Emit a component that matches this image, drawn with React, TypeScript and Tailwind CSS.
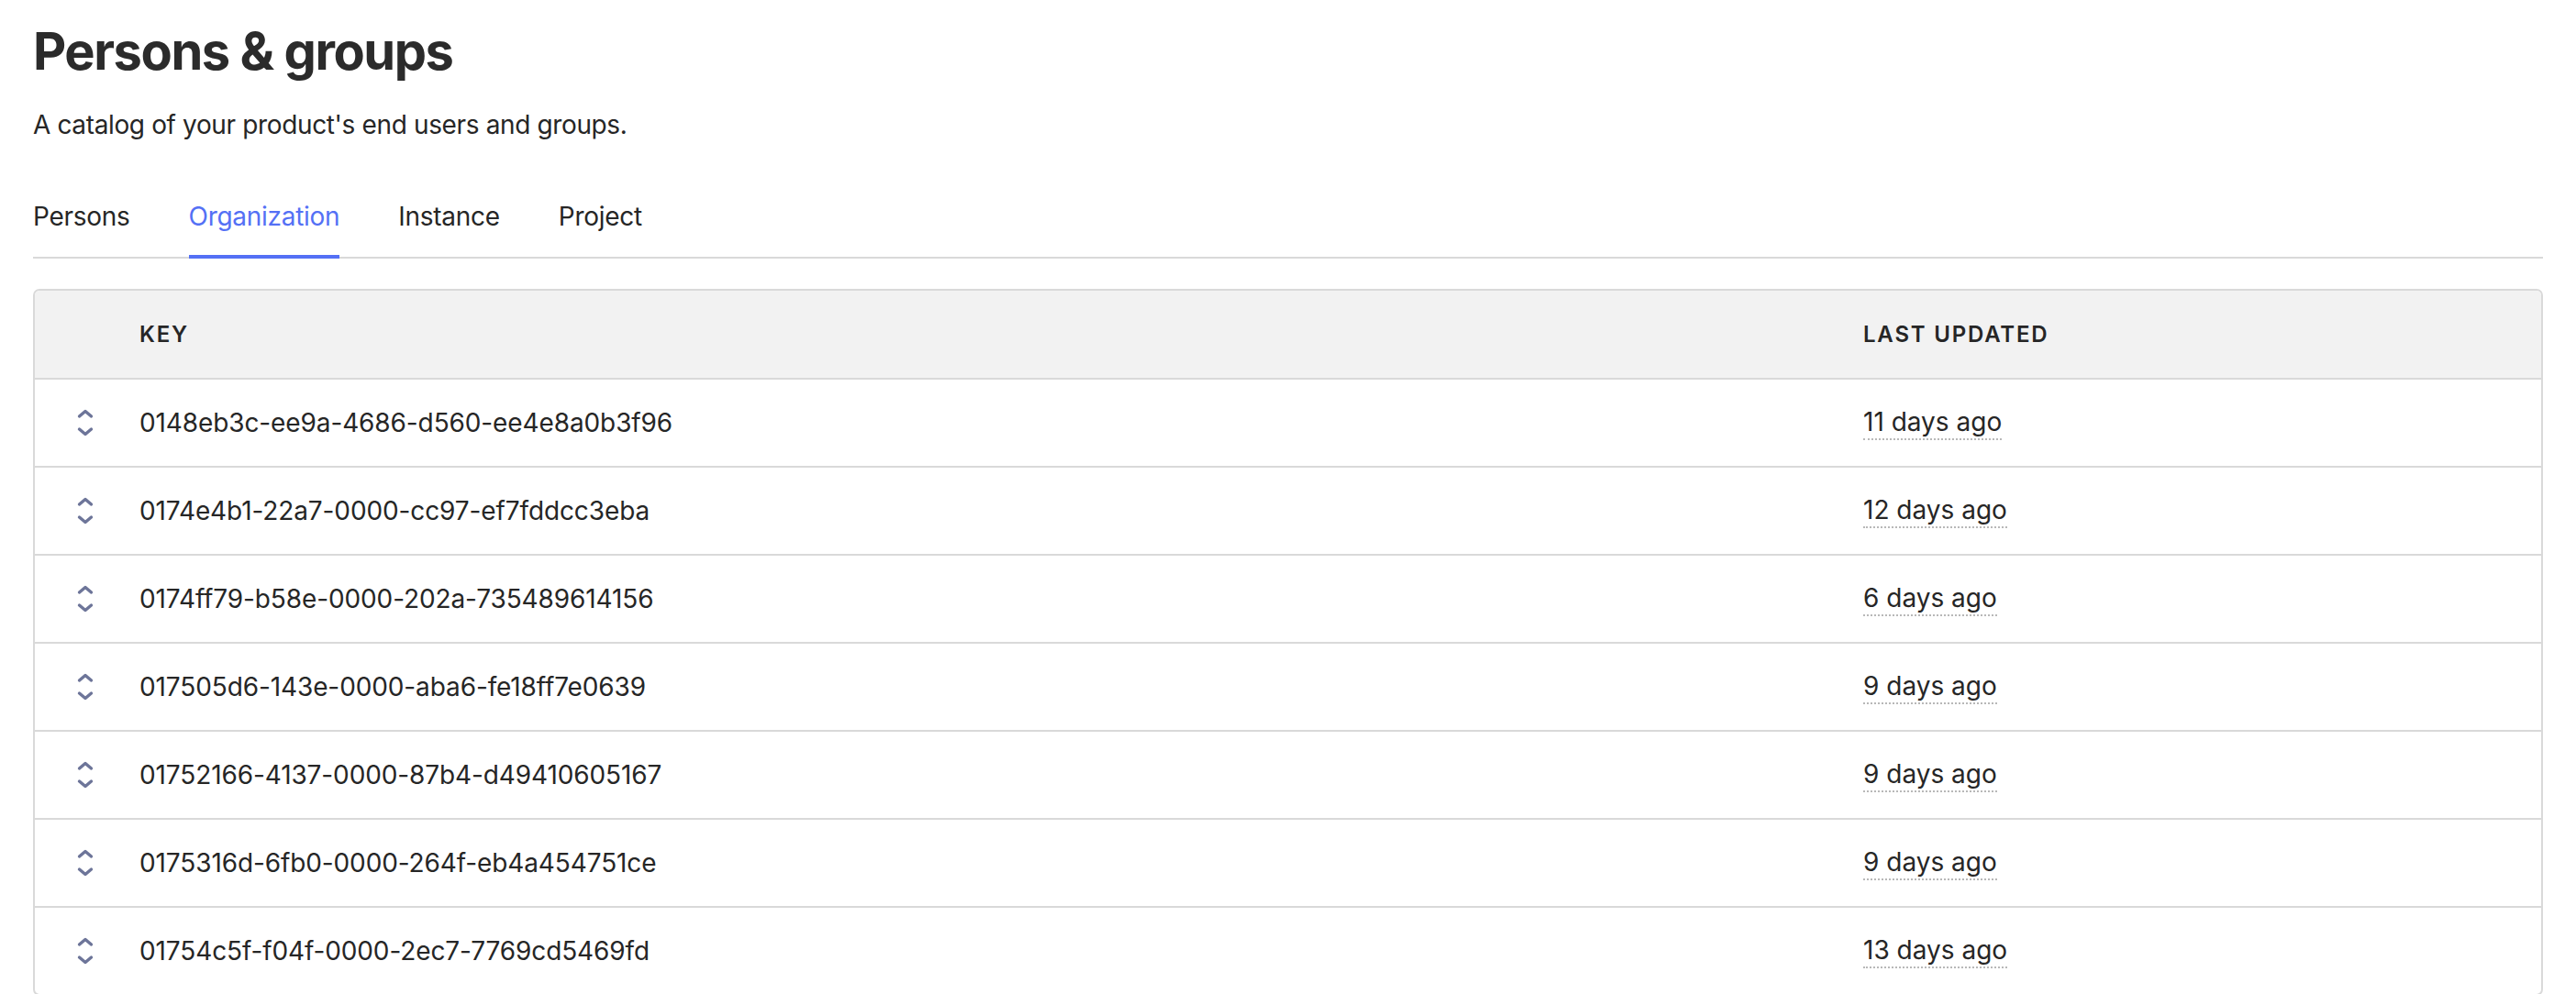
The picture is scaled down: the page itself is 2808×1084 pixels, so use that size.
import React from "react";

const rows = [
  { key: "0148eb3c-ee9a-4686-d560-ee4e8a0b3f96", updated: "11 days ago" },
  { key: "0174e4b1-22a7-0000-cc97-ef7fddcc3eba", updated: "12 days ago" },
  { key: "0174ff79-b58e-0000-202a-735489614156", updated: "6 days ago" },
  { key: "017505d6-143e-0000-aba6-fe18ff7e0639", updated: "9 days ago" },
  { key: "01752166-4137-0000-87b4-d49410605167", updated: "9 days ago" },
  { key: "0175316d-6fb0-0000-264f-eb4a454751ce", updated: "9 days ago" },
  { key: "01754c5f-f04f-0000-2ec7-7769cd5469fd", updated: "13 days ago" },
];

const tabs = ["Persons", "Organization", "Instance", "Project"];

function SortIcon() {
  return (
    <svg width="20" height="30" viewBox="0 0 20 30" fill="none">
      <path d="M3.5 8 L10 2.5 L16.5 8" stroke="#6d7599" strokeWidth="3.4" strokeLinecap="round" strokeLinejoin="round" />
      <path d="M3.5 22 L10 27.5 L16.5 22" stroke="#6d7599" strokeWidth="3.4" strokeLinecap="round" strokeLinejoin="round" />
    </svg>
  );
}

export default function App() {
  return (
    <div
      className="min-h-screen bg-white px-[36px] text-[#262626]"
      style={{ fontFamily: "Inter, 'Noto Sans', sans-serif" }}
    >
      <h1 className="pt-[22px] text-[56px] leading-[68px] font-bold text-[#2b2b2b] tracking-[-0.026em]">
        Persons &amp; groups
      </h1>
      <p className="mt-[26px] text-[28px] leading-[40px] tracking-[-0.013em]">
        A catalog of your product's end users and groups.
      </p>
      <div className="mt-[60px] flex gap-[64px] border-b-2 border-[#d9d9d9]">
        {tabs.map((t, i) => (
          <div
            key={t}
            className={
              i === 1
                ? "-mb-[2px] border-b-4 border-[#5470f5] pb-[22px] text-[28px] leading-[40px] tracking-[-0.01em] text-[#5470f5]"
                : "-mb-[2px] border-b-4 border-transparent pb-[22px] text-[28px] leading-[40px] tracking-[-0.01em] text-[#262626]"
            }
          >
            {t}
          </div>
        ))}
      </div>
      <div className="mt-[33px] overflow-hidden rounded-[7px] border-2 border-[#d9d9d9]">
        <div className="grid h-[95px] grid-cols-[114px_1879px_1fr] items-center bg-[#f2f2f2] text-[24px] font-semibold tracking-[0.075em] text-[#262626]">
          <div />
          <div>KEY</div>
          <div>LAST UPDATED</div>
        </div>
        {rows.map((r) => (
          <div
            key={r.key}
            className="grid h-[96px] grid-cols-[114px_1879px_1fr] items-center border-t-2 border-[#d9d9d9] text-[28px]"
          >
            <div className="flex pl-[45px]">
              <SortIcon />
            </div>
            <div className="leading-[40px] tracking-[-0.004em]">{r.key}</div>
            <div className="flex">
              <span className="border-b-2 border-dotted border-[#b8b8b8] leading-[36px]">{r.updated}</span>
            </div>
          </div>
        ))}
      </div>
    </div>
  );
}
